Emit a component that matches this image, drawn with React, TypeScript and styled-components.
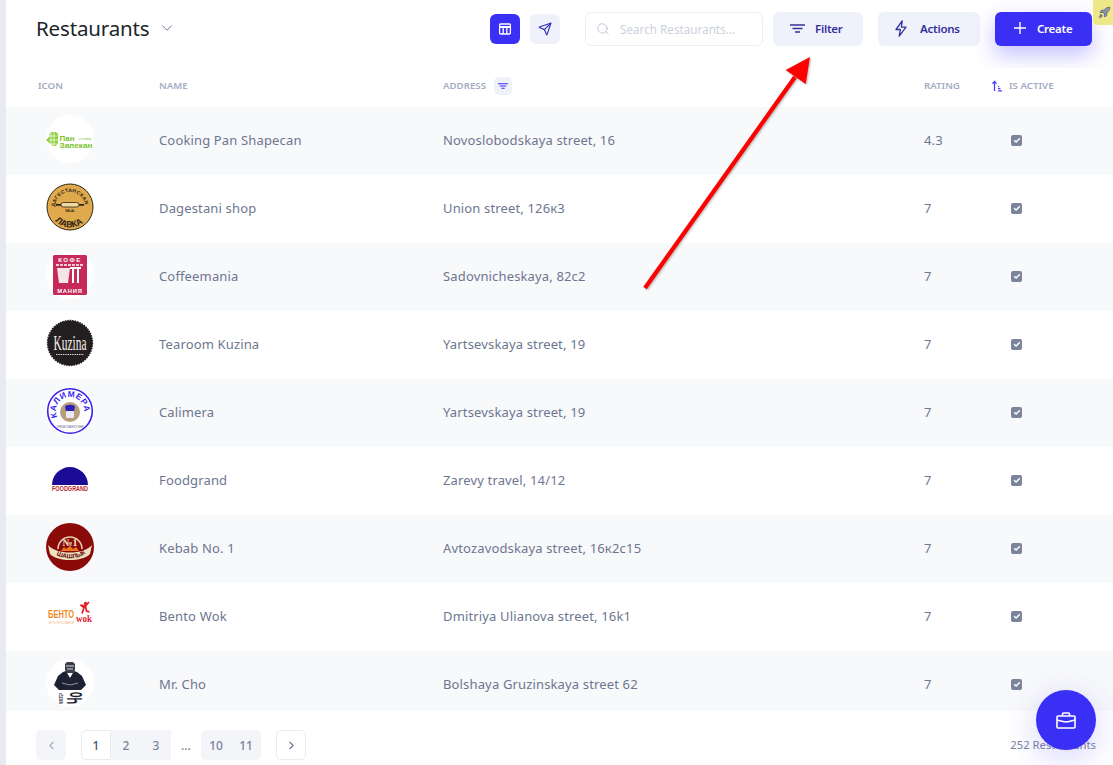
import React from "react";
import styled, { createGlobalStyle } from "styled-components";
import { ChevronDown, ChevronLeft, ChevronRight, Rocket, Search, Send } from "lucide-react";

const Global = createGlobalStyle`
  html, body { margin: 0; padding: 0; height: 100%; background: #fff; overflow: hidden; }
  #root { height: 100%; }
  * { box-sizing: border-box; }
`;
const Page = styled.div`
  position: relative; display: flex; height: 765px; overflow: hidden;
  font-family: "Noto Sans", "Open Sans", sans-serif; background: #fff;
`;
const Rail = styled.div`width: 6px; flex: none; background: #e9ebf3;`;
const Main = styled.main`flex: 1; min-width: 0; display: flex; flex-direction: column;`;
const Toolbar = styled.header`
  height: 68px; flex: none; display: flex; align-items: flex-start; padding: 12px 21px 0 30px;
`;
const TitleBlock = styled.div`display: flex; align-items: center; height: 32px; gap: 8px; margin-right: auto;`;
const Title = styled.h1`margin: 0; font-size: 20.5px; font-weight: 400; color: #212529; letter-spacing: -0.15px;`;
const ViewButton = styled.button<{ $active?: boolean }>`
  width: 30px; height: 30px; margin: 2px 10px 0 0; padding: 0; border: 0; border-radius: 6px;
  display: flex; align-items: center; justify-content: center;
  background: ${p => (p.$active ? "#3a2ff5" : "#f0f2fb")};
  color: ${p => (p.$active ? "#fff" : "#3531b0")};
`;
const SearchBox = styled.label`
  width: 178px; height: 34px; margin: 0 10px 0 15px; padding: 0 10px; border: 1px solid #eceef6; border-radius: 6px;
  display: flex; align-items: center; gap: 10px; color: #b9bfce; background: #fff;
`;
const SearchInput = styled.input`
  flex: 1; min-width: 0; border: 0; padding: 0 0 1px; outline: 0; background: none; font: inherit; font-size: 11.7px;
  &::placeholder { color: #ccd1dd; opacity: 1; }
`;
const ActionButton = styled.button<{ $primary?: boolean; $w: number; $mr?: number; $pl: number; $gap: number }>`
  width: ${p => p.$w}px; height: 34px; margin-right: ${p => p.$mr ?? 0}px; padding: 0 0 2px ${p => p.$pl}px; border: 0; border-radius: 6px;
  display: flex; align-items: center; gap: ${p => p.$gap}px;
  font: inherit; font-size: 11.5px; font-weight: 600; letter-spacing: -0.25px;
  background: ${p => (p.$primary ? "#3a2ff5" : "#f0f2fb")};
  color: ${p => (p.$primary ? "#fff" : "#34319c")};
  box-shadow: ${p => (p.$primary ? "0 9px 22px rgba(58,47,245,.3)" : "none")};
`;
const Corner = styled.div`
  position: absolute; top: 0; right: 0; width: 20px; height: 25px; padding-right: 2px; border-bottom-left-radius: 4px;
  background: #efe888; color: #626981; display: flex; align-items: center; justify-content: flex-end;
  svg { fill: #8d93a8; }
`;
const Row = styled.div<{ $alt?: boolean; $head?: boolean }>`
  flex: none; height: ${p => (p.$head ? 39 : 68)}px; display: grid; align-items: center;
  grid-template-columns: 121px 284px 481px 85px 1fr; padding-left: 32px;
  background: ${p => (p.$alt ? "#f8f9fb" : "#fff")};
`;
const Rows = styled.div`flex: 1; min-height: 0; overflow: hidden;`;
const HeadCell = styled.div`
  display: flex; align-items: center; gap: 8px; font-size: 9.7px; font-weight: 600; color: #a4abc3; height: 100%; padding-bottom: 4px;
`;
const SortedHead = styled(HeadCell)`margin-left: -18px; gap: 6px;`;
const FilterBadge = styled.span`
  width: 18px; height: 18px; border-radius: 5px; background: #f0f2fb; color: #3a2ff5;
  display: flex; align-items: center; justify-content: center;
`;
const Cell = styled.div`font-size: 13px; color: #6d768f; letter-spacing: 0.15px; white-space: nowrap; padding-bottom: 2px;`;
const LogoCell = styled.div`align-self: start; padding: 8px 0 0 8px;`;
const LogoDisc = styled.div`
  width: 48px; height: 48px; border-radius: 50%; background: #fff;
  svg { display: block; overflow: visible; }
`;
const Check = styled.span`
  display: flex; width: 11px; height: 11px; margin-left: 2px; border-radius: 2px; background: #7b849b;
  align-items: center; justify-content: center;
`;
const Footer = styled.footer`
  height: 54px; flex: none; display: flex; align-items: flex-start; padding: 19px 17px 0 30px;
  font-size: 11.3px; color: #6d768f;
`;
const NavButton = styled.button<{ $muted?: boolean }>`
  width: 30px; height: 30px; padding: 0; border-radius: 5px; display: flex; align-items: center; justify-content: center;
  border: ${p => (p.$muted ? "0" : "1px solid #e9ebf3")};
  background: ${p => (p.$muted ? "#f4f5f9" : "#fff")};
  color: ${p => (p.$muted ? "#a4abc3" : "#6d768f")};
`;
const Pages = styled.div`display: flex; margin: 0 15px;`;
const PageBtn = styled.button<{ $current?: boolean; $gap?: boolean; $start?: boolean; $end?: boolean }>`
  width: 30px; height: 30px; padding: 0; font: inherit; font-size: 12px; font-weight: 500; display: flex; align-items: center; justify-content: center;
  border: ${p => (p.$current ? "1px solid #e9ebf3" : "0")};
  border-radius: ${p => (p.$current || p.$start ? "5px 0 0 5px" : p.$end ? "0 5px 5px 0" : "0")};
  background: ${p => (p.$current || p.$gap ? "#fff" : "#f4f5f9")};
  color: ${p => (p.$current ? "#4c5468" : "#7b849b")};
`;
const Total = styled.div`margin-left: auto; padding-top: 7px; color: #7b849b;`;
const Fab = styled.button`
  position: absolute; left: 1036px; top: 690px; width: 60px; height: 60px; border: 0; border-radius: 50%;
  background: #3a2ff5; color: #fff; display: flex; align-items: center; justify-content: center;
  box-shadow: 0 8px 34px rgba(58,47,245,.22);
`;
const Arrow = styled.svg`position: absolute; left: 0; top: 0; pointer-events: none;`;

const T = styled.text`font-family: "Liberation Sans", sans-serif;`;
const Serif = styled.text`font-family: "Liberation Serif", serif;`;

const LogoPan = () => (
  <svg width="48" height="48" viewBox="0 0 48 48">
    <path d="M0 25l3-3 1-4 2-1h4l2 2v9l-2 3H7z" fill="#8ccf3c" />
    <path d="M3 21h8M3 25h9M5 29h6M5 18v13M8 17v15" stroke="#fff" strokeWidth=".7" />
    <T x="13.5" y="26" fontSize="8" fontWeight="700" fill="#79c429">Пан</T>
    <T x="13.5" y="33" fontSize="7.6" fontWeight="700" fill="#79c429" textLength="33" lengthAdjust="spacingAndGlyphs">Запекан</T>
    <T x="33" y="24.5" fontSize="2.6" fill="#79c429">от cooking</T>
  </svg>
);
const LogoLavka = () => (
  <svg width="48" height="48" viewBox="0 0 48 48">
    <defs>
      <path id="la1" d="M11 31.5A15 15 0 1 1 37 31.5" />
      <path id="la2" d="M3.5 24a20.5 20.5 0 0 0 41 0" />
    </defs>
    <circle cx="24" cy="24" r="23" fill="#e0a94c" stroke="#2c2416" strokeWidth="1" />
    <T fontSize="5" fontWeight="700" fill="#2c2416" letterSpacing=".3"><textPath href="#la1" startOffset="8">ДАГЕСТАНСКАЯ</textPath></T>
    <T fontSize="9" fontWeight="700" fill="#2c2416"><textPath href="#la2" startOffset="15">ЛАВКА</textPath></T>
    <rect x="15" y="19.5" width="18" height="4.5" rx="2.2" fill="#f0d9a0" stroke="#2c2416" strokeWidth=".8" />
    <path d="M10 21.8h5M33 21.8h5" stroke="#2c2416" strokeWidth="1.8" />
    <T x="24" y="29" fontSize="2.8" fontWeight="700" textAnchor="middle" fill="#2c2416">HALAL</T>
  </svg>
);
const LogoCoffee = () => (
  <svg width="48" height="48" viewBox="0 0 48 48">
    <rect x="7" y="4" width="34" height="40" rx="1.5" fill="#c62a5b" />
    <T x="24" y="11" fontSize="6.2" fontWeight="700" fill="#fff" textAnchor="middle" letterSpacing="1.4">КОФЕ</T>
    <path d="M10 14h28" stroke="#f3c9d7" strokeWidth="2" strokeDasharray="3 1" />
    <path d="M11 17h13l-2 15h-9z" fill="#f6e4e9" />
    <path d="M24 16h11v2h-2v14h-2V18h-3v14h-2V18h-2z" fill="#fff" />
    <T x="24" y="42" fontSize="5.8" fontWeight="700" fill="#fff" textAnchor="middle" letterSpacing=".8">МАНИЯ</T>
  </svg>
);
const LogoKuzina = () => (
  <svg width="48" height="48" viewBox="0 0 48 48">
    <circle cx="24" cy="24" r="22.5" fill="#231f20" stroke="#231f20" strokeWidth="1.4" strokeDasharray="1.5 1" />
    <Serif x="24" y="31" fontSize="20" fill="#f4f1ea" textAnchor="middle" textLength="33" lengthAdjust="spacingAndGlyphs">Kuzina</Serif>
    <path d="M10 35.5h28" stroke="#d8d4cc" strokeWidth="1.2" strokeDasharray="1.5 .8" />
  </svg>
);
const LogoCalimera = () => (
  <svg width="48" height="48" viewBox="0 0 48 48">
    <defs><path id="ca1" d="M11.9 31A14 14 0 1 1 36.1 31" /></defs>
    <circle cx="24" cy="24" r="22.3" fill="#fff" stroke="#3a1ff0" strokeWidth="1.6" />
    <circle cx="24" cy="25" r="10" fill="#b89d7c" />
    <T fontSize="8.4" fontWeight="700" fill="#3a1ff0" letterSpacing=".6"><textPath href="#ca1" startOffset="1">КАЛИМЕРА</textPath></T>
    <path d="M19 20c0-3 10-3 10 0l-1 4h-8z" fill="#2a20b8" />
    <rect x="20" y="24" width="8" height="7" rx="1" fill="#e9e9f5" />
    <T x="24" y="41" fontSize="2.8" fill="#5a5a8c" textAnchor="middle">ГРЕЧЕСКАЯ КУХНЯ</T>
  </svg>
);
const LogoFood = () => (
  <svg width="48" height="48" viewBox="0 0 48 48">
    <path d="M6 30a18 18 0 0 1 36 0z" fill="#1c0b94" />
    <T x="24" y="36" fontSize="6.6" fontWeight="700" fill="#b5242a" textAnchor="middle" textLength="36" lengthAdjust="spacingAndGlyphs">FOODGRAND</T>
  </svg>
);
const LogoKebab = () => (
  <svg width="48" height="48" viewBox="0 0 48 48">
    <defs><path id="ke1" d="M8 30C15 37 33 37 40 30" /></defs>
    <circle cx="24" cy="24" r="24" fill="#8a0a0a" />
    <path d="M12 26a12 12 0 0 1 24 0" fill="none" stroke="#e9d6ae" strokeWidth="1.6" />
    <Serif x="24" y="23" fontSize="10" fontWeight="700" fill="#f4e8cf" textAnchor="middle">№1</Serif>
    <path d="M15 28l3-4 2 2 4-3 3 3 3-2 3 4z" fill="#e8791c" />
    <path d="M2 22C10 32 38 32 46 22l-2 9C36 39 12 39 4 31z" fill="#efe0c0" />
    <T fontSize="6.2" fontWeight="700" fill="#5d0707"><textPath href="#ke1" startOffset="3">ШАШЛЫК</textPath></T>
  </svg>
);
const LogoBento = () => (
  <svg width="48" height="48" viewBox="0 0 48 48">
    <T x="2" y="27" fontSize="10" fontWeight="700" fill="#f18a25" textLength="26" lengthAdjust="spacingAndGlyphs">БЕНТО</T>
    <Serif x="30" y="31" fontSize="11" fontWeight="700" fill="#e3202c" textLength="16" lengthAdjust="spacingAndGlyphs">wok</Serif>
    <circle cx="39.5" cy="12.5" r="1.7" fill="#e3202c" />
    <path d="M43 11l-3.5 4-5-1 3.5 2.5-2 6M39.5 15l1 5 3 1" fill="none" stroke="#e3202c" strokeWidth="1.7" />
    <T x="2" y="32.5" fontSize="2.7" fill="#f3b57c" textLength="26" lengthAdjust="spacingAndGlyphs">СЕТЬ WOK-ПАНОВ</T>
  </svg>
);
const LogoCho = () => (
  <svg width="48" height="48" viewBox="0 0 48 48">
    <path d="M21 3h6l2 2v6l-2 3h-6l-2-3V5z" fill="#3b3f4c" />
    <path d="M17 13l3-1 4 7 4-7 3 1 5 4 4 9-5 5H13l-5-5 4-9z" fill="#1d2233" />
    <path d="M20 7h8M21 10h6" stroke="#d8d8d8" strokeWidth="1" />
    <path d="M16 24l8 2 8-2" stroke="#8d93a8" strokeWidth="1" fill="none" />
    <T fontSize="22" fontWeight="700" fill="#1d2233" transform="translate(36 45) rotate(-90)" textLength="12" lengthAdjust="spacingAndGlyphs">Чо</T>
    <T fontSize="5" fontWeight="700" fill="#1d2233" transform="translate(16.5 45) rotate(-90)" textLength="11" lengthAdjust="spacingAndGlyphs">МИСТЕР</T>
  </svg>
);

const TableIcon = () => (
  <svg width="14" height="14" viewBox="0 0 14 14" fill="none" stroke="currentColor" strokeWidth="1.3">
    <rect x="1.6" y="2" width="10.8" height="10" rx="1" />
    <path d="M1.6 5h10.8" strokeWidth="2" />
    <path d="M5.2 5.5V12M8.8 5.5V12" />
  </svg>
);
const SortIcon = () => (
  <svg width="12" height="12" viewBox="0 0 12 12" fill="none" stroke="#4a3ff5" strokeWidth="1.3">
    <path d="M3.5 11V1.5M1.4 3.6l2.1-2.1 2.1 2.1" />
    <path d="M7 10.8h4M7 8.6h2.4M7 6.6h1.2" />
  </svg>
);
const FilterIcon = ({ w }: { w: number }) => (
  <svg width={w} height={w * 0.6} viewBox="0 0 15 9" fill="none" stroke="currentColor" strokeWidth="1.6">
    <path d="M0 1h15M2.5 4.5h10M5 8h5" />
  </svg>
);
const ZapIcon = () => (
  <svg width="12" height="17" viewBox="0 0 12 17" fill="none" stroke="currentColor" strokeWidth="1.3" strokeLinejoin="round">
    <path d="M7.2 .8L1 9.5h4.4L4.2 16.2l6.8-9H6.4z" />
  </svg>
);
const PlusIcon = () => (
  <svg width="12" height="12" viewBox="0 0 12 12" fill="none" stroke="currentColor" strokeWidth="1.4">
    <path d="M6 0v12M0 6h12" />
  </svg>
);
const CaseIcon = () => (
  <svg width="20" height="17" viewBox="0 0 20 17" fill="none" stroke="currentColor" strokeWidth="1.6" strokeLinejoin="round">
    <rect x="1" y="4" width="18" height="12" rx="1" />
    <path d="M1 8c3 .8 6 1.8 9 2 3-.2 6-1.2 9-2" />
    <path d="M6.5 4V2a1 1 0 0 1 1-1h5a1 1 0 0 1 1 1v2" />
  </svg>
);

const data: [React.FC, string, string, string][] = [
  [LogoPan, "Cooking Pan Shapecan", "Novoslobodskaya street, 16", "4.3"],
  [LogoLavka, "Dagestani shop", "Union street, 126к3", "7"],
  [LogoCoffee, "Coffeemania", "Sadovnicheskaya, 82c2", "7"],
  [LogoKuzina, "Tearoom Kuzina", "Yartsevskaya street, 19", "7"],
  [LogoCalimera, "Calimera", "Yartsevskaya street, 19", "7"],
  [LogoFood, "Foodgrand", "Zarevy travel, 14/12", "7"],
  [LogoKebab, "Kebab No. 1", "Avtozavodskaya street, 16к2с15", "7"],
  [LogoBento, "Bento Wok", "Dmitriya Ulianova street, 16k1", "7"],
  [LogoCho, "Mr. Cho", "Bolshaya Gruzinskaya street 62", "7"],
];

export default function App() {
  return (
    <Page>
      <Global />
      <Rail />
      <Main>
        <Toolbar>
          <TitleBlock>
            <Title>Restaurants</Title>
            <ChevronDown size={18} color="#6d768f" strokeWidth={1.3} />
          </TitleBlock>
          <ViewButton $active><TableIcon /></ViewButton>
          <ViewButton><Send size={14} strokeWidth={2} /></ViewButton>
          <SearchBox>
            <Search size={14} strokeWidth={1.5} />
            <SearchInput placeholder="Search Restaurants..." />
          </SearchBox>
          <ActionButton $w={90} $mr={15} $pl={17} $gap={10}><FilterIcon w={15} />Filter</ActionButton>
          <ActionButton $w={102} $mr={15} $pl={17} $gap={13}><ZapIcon />Actions</ActionButton>
          <ActionButton $w={97} $primary $pl={19} $gap={11}><PlusIcon />Create</ActionButton>
        </Toolbar>
        <Row $head>
          <HeadCell>ICON</HeadCell>
          <HeadCell>NAME</HeadCell>
          <HeadCell>ADDRESS<FilterBadge><FilterIcon w={10} /></FilterBadge></HeadCell>
          <HeadCell>RATING</HeadCell>
          <SortedHead><SortIcon />IS ACTIVE</SortedHead>
        </Row>
        <Rows>
          {data.map(([Logo, name, address, rating], i) => (
            <Row key={name} $alt={i % 2 === 0}>
              <LogoCell><LogoDisc><Logo /></LogoDisc></LogoCell>
              <Cell>{name}</Cell>
              <Cell>{address}</Cell>
              <Cell>{rating}</Cell>
              <Cell>
                <Check>
                  <svg width="8" height="8" viewBox="0 0 8 8" fill="none" stroke="#fff" strokeWidth="1.4"><path d="M1.2 4.2l1.9 1.8 3.7-3.8" /></svg>
                </Check>
              </Cell>
            </Row>
          ))}
        </Rows>
        <Footer>
          <NavButton $muted><ChevronLeft size={13} /></NavButton>
          <Pages>
            <PageBtn $current>1</PageBtn>
            <PageBtn>2</PageBtn>
            <PageBtn>3</PageBtn>
            <PageBtn $gap>...</PageBtn>
            <PageBtn $start>10</PageBtn>
            <PageBtn $end>11</PageBtn>
          </Pages>
          <NavButton><ChevronRight size={13} /></NavButton>
          <Total>252 Restaurants</Total>
        </Footer>
      </Main>
      <Corner><Rocket size={13} strokeWidth={1.5} /></Corner>
      <Fab><CaseIcon /></Fab>
      <Arrow width="1113" height="765" viewBox="0 0 1113 765">
        <g style={{ filter: "drop-shadow(1px 1px 1px rgba(0,0,0,.3))" }}>
          <path d="M645 288L795 77" stroke="#ff0000" strokeWidth="4.2" />
          <path d="M810 57L785.7 70 805.7 84z" fill="#ff0000" />
        </g>
      </Arrow>
    </Page>
  );
}
